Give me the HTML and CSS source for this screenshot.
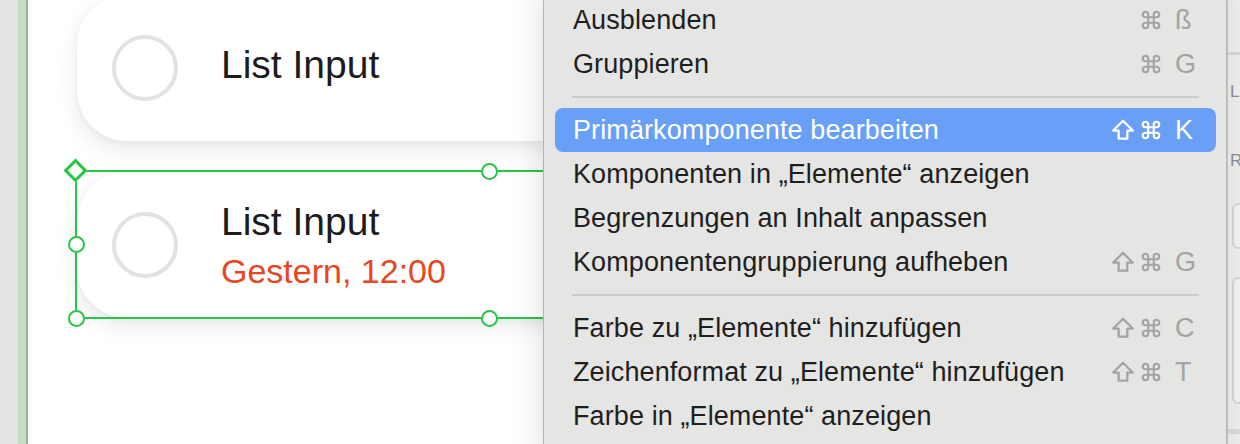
FILE: index.html
```html
<!DOCTYPE html>
<html lang="de">
<head>
<meta charset="utf-8">
<title>Kontextmenü</title>
<link rel="stylesheet" href="styles.css">
</head>
<body>
<div class="app">
  <div class="gutter"></div>
  <div class="ruler"></div>
  <div class="edge"></div>
  <main class="canvas">
    <div class="card card-top">
      <span class="radio"></span>
      <div class="card-text">
        <div class="title single">List Input</div>
      </div>
    </div>
    <div class="card card-sel">
      <span class="radio"></span>
      <div class="card-text">
        <div class="title">List Input</div>
        <div class="subtitle">Gestern, 12:00</div>
      </div>
    </div>
    <div class="selection">
      <span class="handle diamond h-tl"></span>
      <span class="handle dot h-ml"></span>
      <span class="handle dot h-bl"></span>
      <span class="handle dot h-tm"></span>
      <span class="handle dot h-bm"></span>
    </div>
  </main>
  <aside class="panel">
    <div class="panel-head"></div>
    <div class="panel-label l1">L</div>
    <div class="panel-label l2">R</div>
    <div class="panel-box b1"></div>
    <div class="panel-box b2"></div>
    <div class="panel-foot"></div>
  </aside>

  <nav class="menu">
    <div class="item"><span class="label">Ausblenden</span><span class="keys"><svg class="cmd" viewBox="0 0 24 24"><path d="M15 6v12a3 3 0 1 0 3-3H6a3 3 0 1 0 3 3V6a3 3 0 1 0-3 3h12a3 3 0 1 0-3-3"/></svg><span class="key">ß</span></span></div>
    <div class="item"><span class="label">Gruppieren</span><span class="keys"><svg class="cmd" viewBox="0 0 24 24"><path d="M15 6v12a3 3 0 1 0 3-3H6a3 3 0 1 0 3 3V6a3 3 0 1 0-3 3h12a3 3 0 1 0-3-3"/></svg><span class="key">G</span></span></div>
    <div class="sep"></div>
    <div class="item active"><span class="label">Primärkomponente bearbeiten</span><span class="keys"><svg class="shift" viewBox="0 0 24 24"><path d="M12 3.5 21 12.5h-5v7.5H8v-7.5H3z"/></svg><svg class="cmd" viewBox="0 0 24 24"><path d="M15 6v12a3 3 0 1 0 3-3H6a3 3 0 1 0 3 3V6a3 3 0 1 0-3 3h12a3 3 0 1 0-3-3"/></svg><span class="key">K</span></span></div>
    <div class="item"><span class="label">Komponenten in „Elemente“ anzeigen</span></div>
    <div class="item"><span class="label">Begrenzungen an Inhalt anpassen</span></div>
    <div class="item"><span class="label">Komponentengruppierung aufheben</span><span class="keys"><svg class="shift" viewBox="0 0 24 24"><path d="M12 3.5 21 12.5h-5v7.5H8v-7.5H3z"/></svg><svg class="cmd" viewBox="0 0 24 24"><path d="M15 6v12a3 3 0 1 0 3-3H6a3 3 0 1 0 3 3V6a3 3 0 1 0-3 3h12a3 3 0 1 0-3-3"/></svg><span class="key">G</span></span></div>
    <div class="sep"></div>
    <div class="item"><span class="label">Farbe zu „Elemente“ hinzufügen</span><span class="keys"><svg class="shift" viewBox="0 0 24 24"><path d="M12 3.5 21 12.5h-5v7.5H8v-7.5H3z"/></svg><svg class="cmd" viewBox="0 0 24 24"><path d="M15 6v12a3 3 0 1 0 3-3H6a3 3 0 1 0 3 3V6a3 3 0 1 0-3 3h12a3 3 0 1 0-3-3"/></svg><span class="key">C</span></span></div>
    <div class="item"><span class="label">Zeichenformat zu „Elemente“ hinzufügen</span><span class="keys"><svg class="shift" viewBox="0 0 24 24"><path d="M12 3.5 21 12.5h-5v7.5H8v-7.5H3z"/></svg><svg class="cmd" viewBox="0 0 24 24"><path d="M15 6v12a3 3 0 1 0 3-3H6a3 3 0 1 0 3 3V6a3 3 0 1 0-3 3h12a3 3 0 1 0-3-3"/></svg><span class="key">T</span></span></div>
    <div class="item"><span class="label">Farbe in „Elemente“ anzeigen</span></div>
  </nav>
</div>
</body>
</html>
```

FILE: styles.css
```css
* { box-sizing: border-box; }
html, body { margin: 0; padding: 0; }
body {
  font-family: "Liberation Sans", Arial, sans-serif;
  background: #e4e4e4;
  width: 1240px;
  height: 444px;
  overflow: hidden;
}
.app {
  position: relative;
  display: flex;
  width: 1240px;
  height: 444px;
  overflow: hidden;
}
.gutter { width: 18px; background: #e3e3e3; flex: none; }
.ruler { width: 8px; background: #bfe0c5; flex: none; }
.edge { width: 2px; background: #a9a9a9; flex: none; }

.canvas {
  position: relative;
  flex: 1;
  background: #ffffff;
  padding: 0 0 0 49px;
  display: flex;
  flex-direction: column;
  gap: 31px;
  overflow: hidden;
}
.card {
  flex: none;
  width: 640px;
  height: 146px;
  background: #fff;
  border-radius: 50px;
  box-shadow: 0 8px 22px rgba(0,0,0,0.09), 0 2px 6px rgba(0,0,0,0.04);
  display: flex;
  align-items: center;
  padding-left: 35px;
  gap: 43px;
}
.card-top { margin-top: -5px; }
.radio {
  flex: none;
  width: 66px;
  height: 66px;
  border-radius: 50%;
  border: 4px solid #e2e2e2;
}
.card-text { display: flex; flex-direction: column; }
.title {
  font-size: 39px;
  line-height: 46px;
  color: #1c1c1c;
}
.title.single { margin-bottom: 6px; }
.subtitle {
  margin-top: 6px;
  font-size: 34px;
  line-height: 40px;
  color: #e8461f;
}

.selection {
  position: absolute;
  left: 47px;
  top: 170px;
  width: 700px;
  height: 149px;
  border: 2px solid #28c645;
  border-right: none;
}
.handle {
  position: absolute;
  background: #fff;
  border: 2px solid #28c645;
}
.dot { width: 17px; height: 17px; border-radius: 50%; }
.diamond { width: 17px; height: 17px; transform: rotate(45deg); border-width: 3px; }
.h-tl { left: -10.5px; top: -10.5px; }
.h-ml { left: -9.5px; top: 64px; }
.h-bl { left: -9.5px; top: 138px; }
.h-tm { left: 404px; top: -9.5px; }
.h-bm { left: 404px; top: 138px; }

.panel {
  position: relative;
  flex: none;
  width: 14px;
  background: #ececec;
  border-left: 2px solid #c9c9c9;
}
.panel-head {
  position: absolute; left: 0; right: 0; top: 52px; height: 3px; background: #d6d6d6;
}
.panel-label {
  position: absolute; left: 2px; font-size: 17px; color: #8c8c8c;
}
.l1 { top: 82px; }
.l2 { top: 151px; }
.panel-box {
  position: absolute; left: 4px; width: 30px;
  border: 2px solid #d3d3d3; border-radius: 6px; background: #f0f0f0;
}
.b1 { top: 203px; height: 46px; }
.b2 { top: 277px; height: 127px; }
.panel-foot {
  position: absolute; left: 0; right: 0; top: 429px; height: 5px; background: #d7d7d7;
}

.menu {
  position: absolute;
  left: 543px;
  top: -8px;
  width: 684px;
  height: 470px;
  background: #e5e5e4;
  border-left: 1px solid #b4b4b4;
  border-right: 1px solid #b9b9b9;
  box-shadow: -6px 0 26px rgba(0,0,0,0.10);
  padding: 6px 10px 0 11px;
  display: flex;
  flex-direction: column;
}
.item {
  height: 44px;
  display: flex;
  align-items: center;
  justify-content: space-between;
  padding: 0 24px 0 18px;
  border-radius: 8px;
  color: #1e1e1e;
  font-size: 27px;
  line-height: 44px;
  letter-spacing: 0.1px;
  white-space: nowrap;
}
.item.active { background: #6a9ff8; color: #ffffff; }
.sep {
  height: 22px;
  display: flex;
  align-items: center;
  padding: 0 17px;
}
.sep::before {
  content: "";
  flex: 1;
  height: 2px;
  background: #cbcbcb;
}
.keys {
  display: flex;
  align-items: center;
  color: #a3a3a3;
}
.item.active .keys { color: #ffffff; }
.keys svg {
  fill: none;
  stroke: currentColor;
  stroke-linejoin: round;
  stroke-linecap: round;
}
.cmd { width: 22px; height: 22px; stroke-width: 2.3; margin-right: 13px; margin-left: -2px; }
.shift { width: 26px; height: 26px; stroke-width: 2.1; margin-right: 6px; }
.key {
  width: 17px;
  font-size: 27px;
  line-height: 44px;
  letter-spacing: 0;
}
```
